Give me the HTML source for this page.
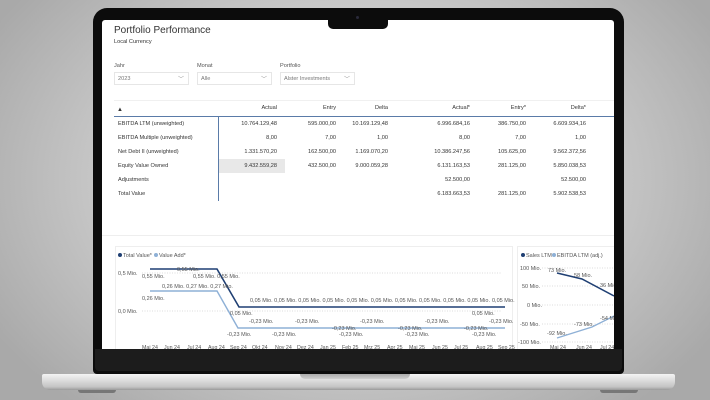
<!DOCTYPE html>
<html><head><meta charset="utf-8"><style>
*{margin:0;padding:0;box-sizing:border-box}
body{width:710px;height:400px;overflow:hidden;position:relative;font-family:"Liberation Sans",sans-serif;
background:radial-gradient(ellipse 420px 300px at 355px 180px,#e2e2e2 0%,#cfcfcf 50%,#a9a9a9 100%)}
.base{position:absolute;left:42px;top:374px;width:633px;height:16px;border-radius:2px 2px 8px 8px;
background:linear-gradient(#f4f4f4 0%,#dcdcdc 40%,#c4c4c4 80%,#9a9a9a 100%)}
.notchb{position:absolute;left:300px;top:374px;width:110px;height:5px;border-radius:0 0 6px 6px;background:linear-gradient(#aaa,#d0d0d0)}
.foot{position:absolute;top:390px;height:3px;background:#777;border-radius:0 0 3px 3px}
.bezel{position:absolute;left:93px;top:8px;width:531px;height:366px;background:#0c0c0c;border-radius:14px 14px 4px 4px}
.chin{position:absolute;left:95px;top:349px;width:527px;height:22px;background:#1c1c1c;border-radius:0 0 4px 4px}
.screen{position:absolute;left:102px;top:20px;width:512px;height:329px;background:#fff;overflow:hidden;border-radius:3px 3px 0 0}
.notch{position:absolute;left:328px;top:8px;width:60px;height:21px;background:#0c0c0c;border-radius:0 0 5px 5px}
.t{position:absolute;font-size:5.6px;color:#333;white-space:nowrap}
.r{text-align:right}
.dd{position:absolute;top:52px;height:13px;border:1px solid #e6e6e6;font-size:5.6px;color:#777;padding:3px 0 0 3px}
.dd span{position:absolute;right:4px;top:1px;font-size:6px;color:#999}
</style></head><body>
<div class="base"></div><div class="notchb"></div>
<div class="foot" style="left:78px;width:38px"></div>
<div class="foot" style="left:600px;width:38px"></div>
<div class="bezel"></div><div class="chin"></div>
<div class="screen">
 <div class="t" style="left:12px;top:5px;font-size:10px;color:#333">Portfolio Performance</div>
 <div class="t" style="left:12px;top:19px;font-size:5.6px">Local Currency</div>
 <div class="t" style="left:12px;top:43px;color:#555">Jahr</div>
 <div class="t" style="left:95px;top:43px;color:#555">Monat</div>
 <div class="t" style="left:178px;top:43px;color:#555">Portfolio</div>
 <div class="dd" style="left:12px;width:75px">2023<span>﹀</span></div>
 <div class="dd" style="left:95px;width:75px">Alle<span>﹀</span></div>
 <div class="dd" style="left:178px;width:75px">Alster Investments<span>﹀</span></div>
 <div style="position:absolute;left:12px;top:80px;width:500px;height:1px;background:#f0f0f0"></div>
 <div style="position:absolute;left:12px;top:96px;width:500px;height:1px;background:#5a7ba8"></div>
 <div style="position:absolute;left:116px;top:97px;width:1px;height:84px;background:#5a7ba8"></div>
 <div style="position:absolute;left:117px;top:139px;width:66px;height:14px;background:#e8e8e8"></div>
 <div class="t" style="left:15px;top:87px;font-size:6px">▲</div>
 <div class="t r" style="left:125px;width:50px;top:85px">Actual</div>
 <div class="t r" style="left:184px;width:50px;top:85px">Entry</div>
 <div class="t r" style="left:236px;width:50px;top:85px">Delta</div>
 <div class="t r" style="left:318px;width:50px;top:85px">Actual*</div>
 <div class="t r" style="left:374px;width:50px;top:85px">Entry*</div>
 <div class="t r" style="left:434px;width:50px;top:85px">Delta*</div>
 <div class="t" style="left:16px;top:101px">EBITDA LTM (unweighted)</div>
 <div class="t" style="left:16px;top:115px">EBITDA Multiple (unweighted)</div>
 <div class="t" style="left:16px;top:129px">Net Debt II (unweighted)</div>
 <div class="t" style="left:16px;top:143px">Equity Value Owned</div>
 <div class="t" style="left:16px;top:157px">Adjustments</div>
 <div class="t" style="left:16px;top:171px">Total Value</div>
 <div class="t r" style="left:115px;width:60px;top:101px">10.764.129,48</div>
 <div class="t r" style="left:174px;width:60px;top:101px">595.000,00</div>
 <div class="t r" style="left:226px;width:60px;top:101px">10.169.129,48</div>
 <div class="t r" style="left:308px;width:60px;top:101px">6.996.684,16</div>
 <div class="t r" style="left:364px;width:60px;top:101px">386.750,00</div>
 <div class="t r" style="left:424px;width:60px;top:101px">6.609.934,16</div>
 <div class="t r" style="left:115px;width:60px;top:115px">8,00</div>
 <div class="t r" style="left:174px;width:60px;top:115px">7,00</div>
 <div class="t r" style="left:226px;width:60px;top:115px">1,00</div>
 <div class="t r" style="left:308px;width:60px;top:115px">8,00</div>
 <div class="t r" style="left:364px;width:60px;top:115px">7,00</div>
 <div class="t r" style="left:424px;width:60px;top:115px">1,00</div>
 <div class="t r" style="left:115px;width:60px;top:129px">1.331.570,20</div>
 <div class="t r" style="left:174px;width:60px;top:129px">162.500,00</div>
 <div class="t r" style="left:226px;width:60px;top:129px">1.169.070,20</div>
 <div class="t r" style="left:308px;width:60px;top:129px">10.386.247,56</div>
 <div class="t r" style="left:364px;width:60px;top:129px">105.625,00</div>
 <div class="t r" style="left:424px;width:60px;top:129px">9.562.372,56</div>
 <div class="t r" style="left:115px;width:60px;top:143px">9.432.559,28</div>
 <div class="t r" style="left:174px;width:60px;top:143px">432.500,00</div>
 <div class="t r" style="left:226px;width:60px;top:143px">9.000.059,28</div>
 <div class="t r" style="left:308px;width:60px;top:143px">6.131.163,53</div>
 <div class="t r" style="left:364px;width:60px;top:143px">281.125,00</div>
 <div class="t r" style="left:424px;width:60px;top:143px">5.850.038,53</div>
 <div class="t r" style="left:308px;width:60px;top:157px">52.500,00</div>
 <div class="t r" style="left:424px;width:60px;top:157px">52.500,00</div>
 <div class="t r" style="left:308px;width:60px;top:171px">6.183.663,53</div>
 <div class="t r" style="left:364px;width:60px;top:171px">281.125,00</div>
 <div class="t r" style="left:424px;width:60px;top:171px">5.902.538,53</div>
 <div style="position:absolute;left:0;top:215px;width:512px;height:1px;background:#eee"></div>
 <svg style="position:absolute;left:0;top:0" width="512" height="329" font-family="Liberation Sans" font-size="5.5" fill="#555">
  <rect x="13.5" y="226.5" width="397" height="110" fill="none" stroke="#eee"/>
  <rect x="415.5" y="226.5" width="110" height="110" fill="none" stroke="#eee"/>
  <circle cx="18" cy="235" r="2" fill="#1f3f73"/><text x="21" y="237">Total Value*</text>
  <circle cx="54" cy="235" r="2" fill="#8eb0d6"/><text x="57" y="237">Value Add*</text>
  <g stroke="#ddd" stroke-dasharray="1,1.5"><line x1="40" y1="253" x2="400" y2="253"/><line x1="40" y1="291" x2="400" y2="291"/></g>
  <text x="16" y="255">0,5 Mio.</text><text x="16" y="293">0,0 Mio.</text>
  <polyline points="48,249 115,249 137,287 403,287" fill="none" stroke="#1f3f73" stroke-width="1.6"/>
  <polyline points="48,271 115,271 136,308 403,308" fill="none" stroke="#8eb0d6" stroke-width="1.4"/>
  <text x="40" y="258">0,55 Mio.</text><text x="75" y="251">0,55 Mio.</text><text x="91" y="258">0,55 Mio. 0,55 Mio.</text>
  <text x="60" y="268">0,26 Mio. 0,27 Mio. 0,27 Mio.</text><text x="40" y="280">0,26 Mio.</text>
  <text x="148" y="282">0,05 Mio. 0,05 Mio. 0,05 Mio. 0,05 Mio. 0,05 Mio. 0,05 Mio. 0,05 Mio. 0,05 Mio. 0,05 Mio. 0,05 Mio.</text>
  <text x="390" y="282">0,05 Mio.</text><text x="128" y="295">0,05 Mio.</text><text x="370" y="295">0,05 Mio.</text>
  <text x="147" y="303">-0,23 Mio.</text><text x="193" y="303">-0,23 Mio.</text><text x="258" y="303">-0,23 Mio.</text><text x="323" y="303">-0,23 Mio.</text><text x="387" y="303">-0,23 Mio.</text>
  <text x="125" y="316">-0,23 Mio.</text><text x="170" y="316">-0,23 Mio.</text><text x="237" y="316">-0,23 Mio.</text><text x="303" y="316">-0,23 Mio.</text><text x="370" y="316">-0,23 Mio.</text>
  <text x="230" y="310">-0,23 Mio.</text><text x="296" y="310">-0,23 Mio.</text><text x="362" y="310">-0,23 Mio.</text>
  <g font-size="5.3"><text x="40" y="329">Mai 24</text><text x="62" y="329">Jun 24</text><text x="85" y="329">Jul 24</text><text x="106" y="329">Aug 24</text><text x="128" y="329">Sep 24</text><text x="150" y="329">Okt 24</text><text x="173" y="329">Nov 24</text><text x="195" y="329">Dez 24</text><text x="218" y="329">Jan 25</text><text x="240" y="329">Feb 25</text><text x="262" y="329">Mrz 25</text><text x="285" y="329">Apr 25</text><text x="307" y="329">Mai 25</text><text x="330" y="329">Jun 25</text><text x="352" y="329">Jul 25</text><text x="374" y="329">Aug 25</text><text x="396" y="329">Sep 25</text></g>
  <circle cx="421" cy="235" r="2" fill="#1f3f73"/><text x="424" y="237">Sales LTM</text>
  <circle cx="452" cy="235" r="2" fill="#8eb0d6"/><text x="455" y="237">EBITDA LTM (adj.)</text>
  <g stroke="#ddd" stroke-dasharray="1,1.5"><line x1="440" y1="248" x2="512" y2="248"/><line x1="440" y1="266" x2="512" y2="266"/><line x1="440" y1="285" x2="512" y2="285"/><line x1="440" y1="304" x2="512" y2="304"/><line x1="440" y1="322" x2="512" y2="322"/></g>
  <text x="418" y="250">100 Mio.</text><text x="420" y="268">50 Mio.</text><text x="425" y="287">0 Mio.</text><text x="418" y="306">-50 Mio.</text><text x="416" y="324">-100 Mio.</text>
  <polyline points="455,253 480,259 512,276" fill="none" stroke="#1f3f73" stroke-width="1.5"/>
  <polyline points="455,318 490,307 512,296" fill="none" stroke="#8eb0d6" stroke-width="1.3"/>
  <text x="446" y="252">73 Mio.</text><text x="472" y="257">58 Mio.</text><text x="498" y="267">36 Mio.</text>
  <text x="445" y="315">-92 Mio.</text><text x="472" y="306">-73 Mio.</text><text x="498" y="300">-54 Mio.</text>
  <g font-size="5.3"><text x="448" y="329">Mai 24</text><text x="474" y="329">Jun 24</text><text x="498" y="329">Jul 24</text></g>
 </svg>
</div>
<div class="notch"></div>
<div style="position:absolute;left:356px;top:16px;width:3px;height:3px;border-radius:50%;background:#2a2a3a"></div>
</body></html>
